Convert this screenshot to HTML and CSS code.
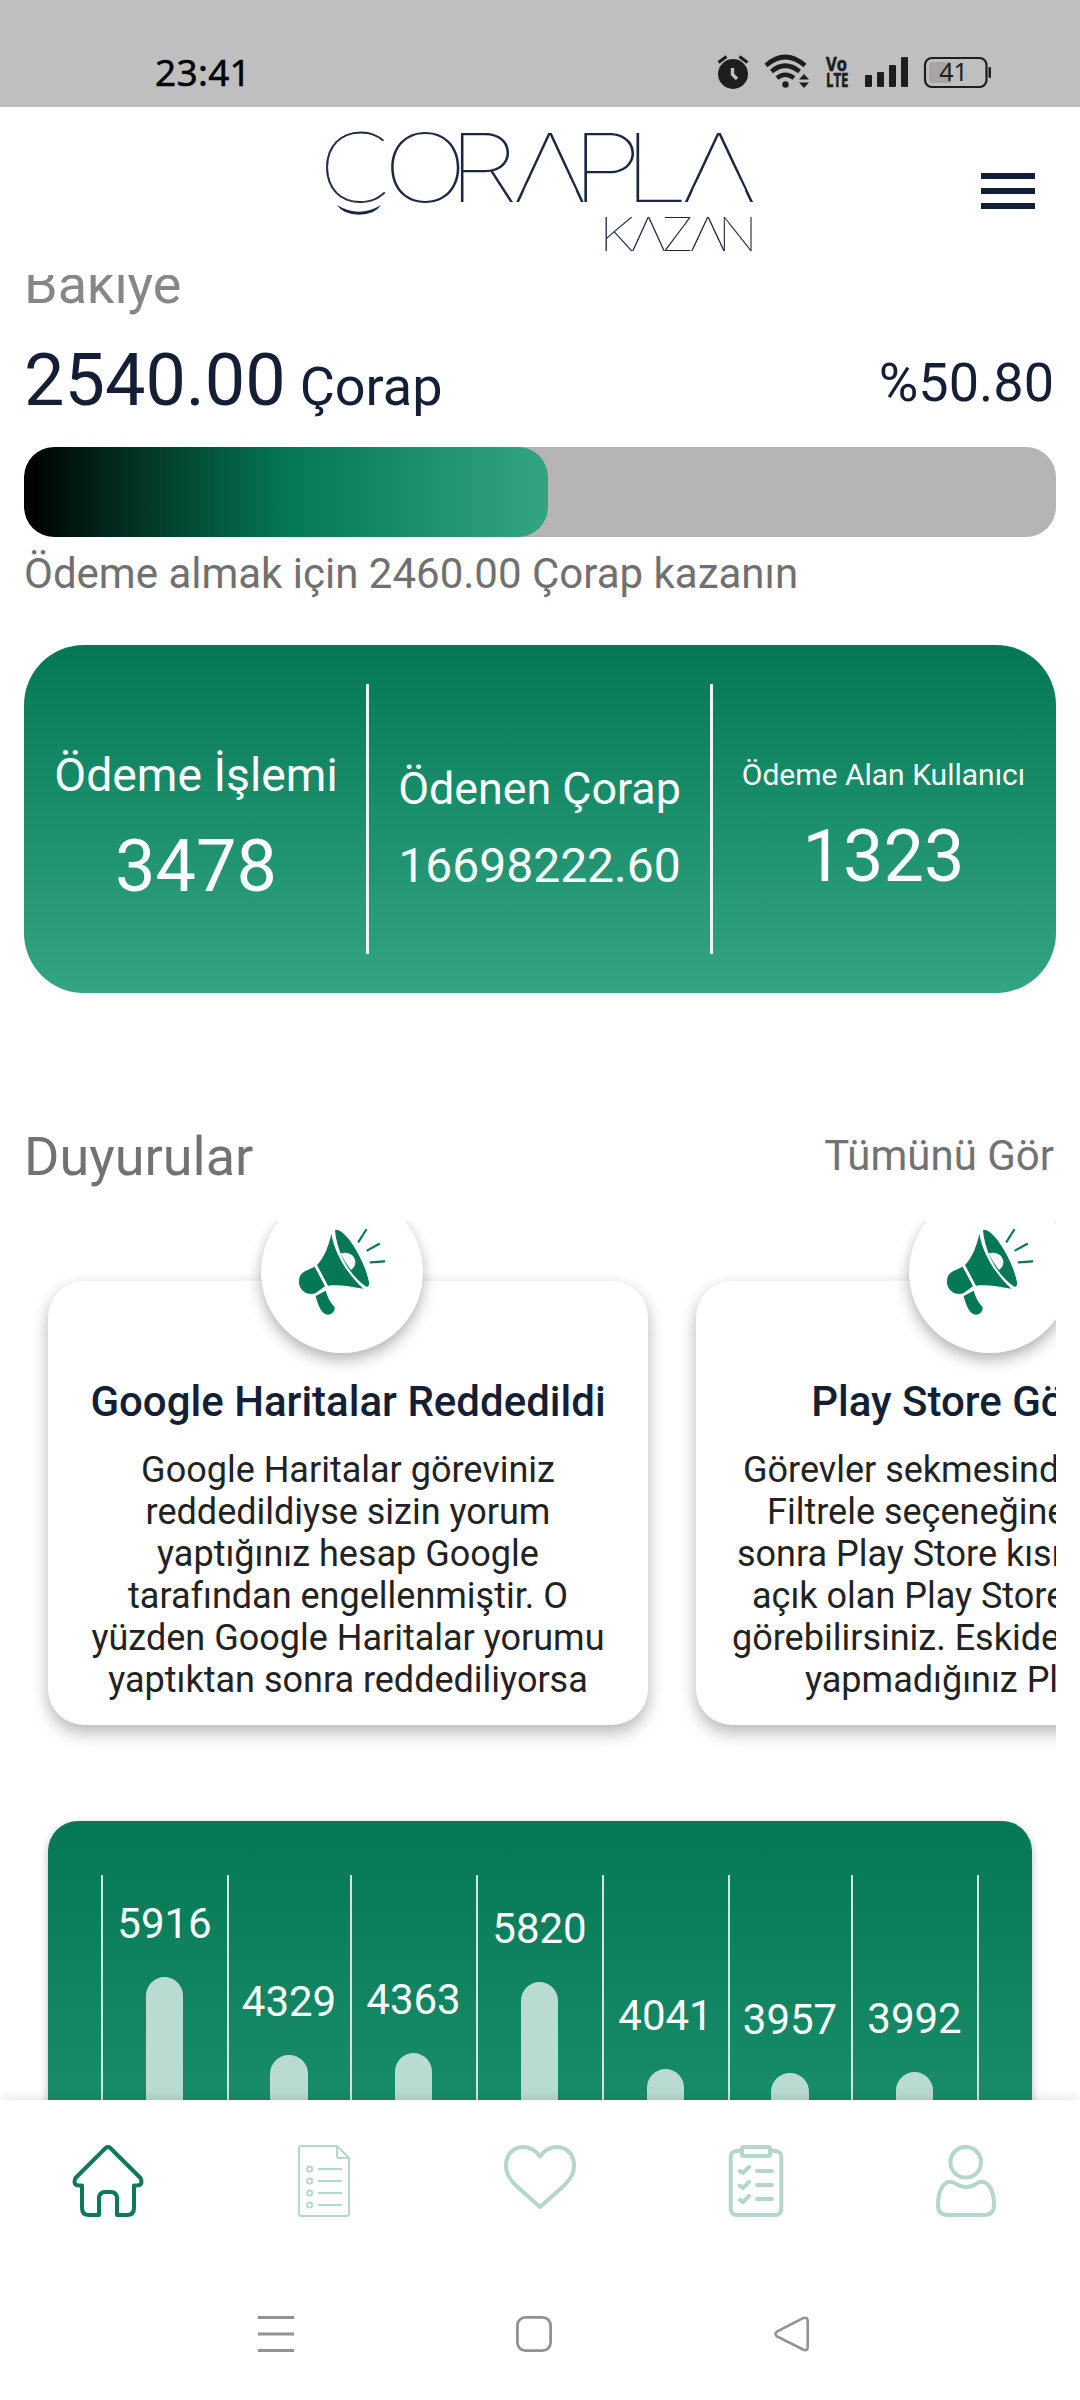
FILE: index.html
```
<!DOCTYPE html>
<html lang="tr">
<head>
<meta charset="utf-8">
<title>Çorapla Kazan</title>
<link rel="stylesheet" href="styles.css">
</head>
<body>
<div class="screen">
  <div class="status">
    <span class="clock">23:41</span>
    <svg class="status-icons" width="276" height="36" viewBox="716 54 276 36">
      <g fill="#1e1e1e">
        <circle cx="733" cy="74" r="15"/>
        <path d="M718.5 62.5l8-6M747.500 62.500l-8-6" stroke="#1e1e1e" stroke-width="3.200"/>
        <path d="M732.500 68v6.500l4.500 4.500" fill="none" stroke="#bfbfbf" stroke-width="3.400"/>
        <g fill="none" stroke="#1e1e1e" stroke-width="4.600">
          <path d="M766 65.500q19-17 39 0M771.500 71.500q13.500-11.500 28 0M777 78q8-6.500 17 0"/>
        </g>
        <circle cx="785.500" cy="84.500" r="3.200"/>
        <path d="M799 79.500l5-5.500 5 5.500zM799 82.500h10l-5 5.500z"/>
        <rect x="865" y="75" width="7" height="12" rx="1"/>
        <rect x="877" y="72" width="7" height="15" rx="1"/>
        <rect x="889" y="65" width="7" height="22" rx="1"/>
        <rect x="901" y="57" width="7" height="30" rx="1"/>
        <rect x="988.500" y="67" width="2.500" height="11" rx="1"/>
      </g>
      <rect x="925" y="58" width="61.500" height="29" rx="7" fill="none" stroke="#1e1e1e" stroke-width="2.200"/>
      <path d="M951 62v21h-18q-4 0-4-4v-13q0-4 4-4z" fill="#a5a5a5"/>
      <text class="batt" x="953.500" y="81" text-anchor="middle">41</text>
      <text class="lte" x="826" y="70.500" textLength="21" lengthAdjust="spacingAndGlyphs">Vo</text>
      <text class="lte" x="826" y="87" textLength="22.500" lengthAdjust="spacingAndGlyphs">LTE</text>
    </svg>
  </div>

  <header class="header">
    <svg class="logo" width="440" height="136" viewBox="320 124 440 136">
      <g class="logo-main">
        <text class="logo-c" transform="translate(319.400 201.500) scale(1.047 1)">C</text>
        <text transform="translate(383.100 201.500) scale(1.187 1)">O</text>
        <text transform="translate(447.900 201.500) scale(1.198 1)">R</text>
        <text transform="translate(512.500 201.500) scale(1.230 1)">A</text>
        <text transform="translate(571 201.500) scale(1.237 1)">P</text>
        <text transform="translate(623.200 201.500) scale(1.223 1)">L</text>
        <text transform="translate(681 201.500) scale(1.246 1)">A</text>
      </g>
      <g class="logo-sub">
        <text transform="translate(598.800 250.500) scale(1.280 1)">K</text>
        <text transform="translate(630.300 250.500) scale(1.218 1)">A</text>
        <text transform="translate(660.600 250.500) scale(1.200 1)">Z</text>
        <text transform="translate(689.200 250.500) scale(1.250 1)">A</text>
        <text transform="translate(717.900 250.500) scale(1.090 1)">N</text>
      </g>
      <!-- hides the crossbars -->
      <path fill="#fff" d="M536.600 165h26.800L575.700 190h-51.400zM705.400 165h27.300L745.200 190H693zM642.200 233h12.600l5.300 11h-23.200zM701.500 233h13l5.500 11h-24z"/>
      <!-- smile under the first letter -->
      <path fill="#1c2740" d="M337 205q22 13.500 44 0q-6 9.500-22 9.800q-16-.3-22-9.800z"/>
    </svg>
    <div class="burger"><i></i><i></i><i></i></div>
  </header>

  <main class="content">
    <h2 class="heading faded">Bakiye</h2>
    <div class="balance">
      <div class="amount">2540.00 <small>Çorap</small></div>
      <div class="percent">%50.80</div>
    </div>
    <div class="progress"><div class="progress-fill" style="width:50.8%"></div></div>
    <p class="hint">Ödeme almak için 2460.00 Çorap kazanın</p>

    <section class="stats">
      <div class="stat"><span class="label label-l">Ödeme İşlemi</span><span class="value">3478</span></div>
      <div class="stat"><span class="label label-m">Ödenen Çorap</span><span class="value value-m">16698222.60</span></div>
      <div class="stat"><span class="label label-s">Ödeme Alan Kullanıcı</span><span class="value">1323</span></div>
    </section>

    <div class="section-head">
      <h2 class="heading">Duyurular</h2>
      <a class="all">Tümünü Gör</a>
    </div>

    <section class="carousel">
      <article class="card">
        <div class="badge">
          <svg width="120" height="120" viewBox="0 0 360 360"><use href="#megaphone"/></svg>
        </div>
        <h3>Google Haritalar Reddedildi</h3>
        <p class="centered">
          <span>Google Haritalar göreviniz</span>
          <span>reddedildiyse sizin yorum</span>
          <span>yaptığınız hesap Google</span>
          <span>tarafından engellenmiştir. O</span>
          <span>yüzden Google Haritalar yorumu</span>
          <span>yaptıktan sonra reddediliyorsa</span>
        </p>
      </article>
      <article class="card">
        <div class="badge">
          <svg width="120" height="120" viewBox="0 0 360 360">
            <g id="megaphone">
              <g fill="#047855">
                <path d="M104 155L135 214L106 235C86 242 64 231 58 210C54 190 60 176 75 169Z"/>
                <path d="M154 56C146 92 134 126 111 150L144 212C175 208 210 214 250 221C205 180 165 120 154 56Z"/>
                <path d="M165 47C172 115 208 180 257 214C265 218 268 212 267 202C256 145 210 62 176 46C170 44 166 43 165 47Z"/>
                <path d="M137 227L107 243C112 265 122 290 135 297C150 304 165 293 164 277C150 262 142 245 137 227Z"/>
              </g>
              <path fill="#fff" d="M182 115C205 108 224 120 226 140C226 152 222 158 213 165C200 148 190 133 182 115Z"/>
              <path fill="none" stroke="#047855" stroke-width="6.500" stroke-linecap="round" d="M258 45L236 80M297 87L262 106M313 139L272 142"/>
            </g>
          </svg>
        </div>
        <h3>Play Store Görevleri</h3>
        <p class="indented">
          <span>Görevler sekmesinde</span>
          <span>Filtrele seçeneğine</span>
          <span>sonra Play Store kısmı</span>
          <span>açık olan Play Store</span>
          <span>görebilirsiniz. Eskiden</span>
          <span>yapmadığınız Play</span>
        </p>
      </article>
    </section>

    <section class="chart">
      <div class="plot">
        <div class="col"><span>5916</span><b style="height:291px"></b></div>
        <div class="col"><span>4329</span><b style="height:213px"></b></div>
        <div class="col"><span>4363</span><b style="height:214.700px"></b></div>
        <div class="col"><span>5820</span><b style="height:286.300px"></b></div>
        <div class="col"><span>4041</span><b style="height:199px"></b></div>
        <div class="col"><span>3957</span><b style="height:194.700px"></b></div>
        <div class="col"><span>3992</span><b style="height:196.400px"></b></div>
      </div>
    </section>
  </main>

  <nav class="tabs">
    <svg width="72" height="72" viewBox="0 0 72 72" fill="none" stroke="#0b7858" stroke-width="4" stroke-linejoin="round">
      <path d="M33.500 3.200Q36 .8 38.500 3.200L68.500 33Q71.500 40.500 65 40.500H62V63Q62 70 55 70H45V53.500Q45 47 38.500 47H33.500Q27 47 27 53.500V70H17Q10 70 10 63V40.500H7Q.5 40.500 3.500 33Z"/>
    </svg>
    <svg width="72" height="72" viewBox="0 0 72 72" fill="none" stroke="#b5d6ca" stroke-width="2" stroke-linejoin="round">
      <path d="M49 1H13Q11 1 11 3V69Q11 71 13 71H59Q61 71 61 69V13L49 1V11Q49 13 51 13H61"/>
      <path d="M30 24h24M30 36h24M30 48h24M30 60h24"/>
      <circle cx="21.700" cy="24" r="2.600"/><circle cx="21.700" cy="36" r="2.600"/><circle cx="21.700" cy="48" r="2.600"/><circle cx="21.700" cy="60" r="2.600"/>
    </svg>
    <svg width="72" height="72" viewBox="42 45 216 216" fill="none" stroke="#b5d6ca" stroke-width="12" stroke-linejoin="round">
      <path d="M150 231L85 173C60 150 48 132 48 106C48 74 70 51 100 51C122 51 138 62 150 80C162 62 178 51 200 51C230 51 252 74 252 106C252 132 240 150 215 173Z"/>
    </svg>
    <svg width="72" height="72" viewBox="0 0 72 72" fill="none" stroke="#b5d6ca" stroke-width="4" stroke-linejoin="round" stroke-linecap="round">
      <rect x="10.700" y="6" width="50.600" height="64" rx="6"/>
      <rect x="22" y="2" width="28" height="9" rx="1.500" fill="#fff"/>
      <path d="M19.800 26L23 28L29 22M19.800 40.500L23 43L29 37M19.800 55L23 57L29 51M37 26h15M37 40h15M37 54h15"/>
    </svg>
    <svg width="72" height="72" viewBox="0 0 72 72" fill="none" stroke="#b5d6ca" stroke-width="4">
      <circle cx="29.700" cy="17.300" r="15.300"/>
      <path d="M14 36.800Q17 36.500 20 39Q30 45.500 40 39Q43 36.500 46 36.800C54 37.500 58 48 58 60Q58 70 48 70H12Q2 70 2 60C2 48 6 37.500 14 36.800Z"/>
    </svg>
  </nav>

  <div class="sysnav">
    <svg width="36" height="36" viewBox="0 0 36 36" fill="none" stroke="#929292" stroke-width="3"><path d="M0 1.500h36M0 18h36M0 34.500h36"/></svg>
    <svg width="36" height="36" viewBox="0 0 36 36" fill="none" stroke="#929292" stroke-width="2.800"><rect x="1.400" y="1.400" width="33.200" height="33.200" rx="8"/></svg>
    <svg width="36" height="36" viewBox="0 0 36 36" fill="none" stroke="#929292" stroke-width="2.600"><path d="M29 2.200Q33.700 .5 33.700 5V31Q33.700 35.500 29 33.500L3 20.500Q0 18 3 15.500Z"/></svg>
  </div>
</div>
</body>
</html>
```
FILE: styles.css
```
* { box-sizing: border-box; margin: 0; padding: 0; }

body {
  width: 1080px;
  height: 2400px;
  background: #fff;
  font-family: Roboto, sans-serif;
  font-weight: 400;
  overflow: hidden;
}

.screen { display: flex; flex-direction: column; height: 2400px; overflow: hidden; }

/* status bar */
.status {
  flex: none;
  height: 107px;
  padding: 0 88px 0 155px;
  background: #bfbfbf;
  display: flex;
  justify-content: space-between;
  align-items: flex-start;
}
.clock { margin-top: 47px; font: 400 37px/50px "Noto Sans", sans-serif; letter-spacing: .3px; -webkit-text-stroke: .5px #000; color: #000; }
.status-icons { margin-top: 54px; }
.batt { font: 400 25px "Noto Sans", sans-serif; fill: #1e1e1e; }
.lte { font: 700 19px "Open Sans", sans-serif; fill: #1e1e1e; stroke: #1e1e1e; stroke-width: .6px; }

/* header */
.header {
  flex: none;
  height: 168px;
  padding: 17px 45px 0 320px;
  background: #fff;
  display: flex;
  justify-content: space-between;
  align-items: flex-start;
}
.logo text { font-family: Inter, sans-serif; font-weight: 100; fill: #1c2740; }
.logo-main text { font-size: 95.300px; }
.logo-main .logo-c { font-family: Lato, sans-serif; font-size: 97.500px; stroke: #1c2740; stroke-width: .8px; }
.logo-sub text { font-size: 46.800px; }
.burger { width: 54px; margin-top: 49px; display: grid; gap: 9px; }
.burger i { height: 6px; background: #121e35; }

/* scrolled content */
.content { flex: none; height: 1825px; padding: 0 24px; overflow: hidden; }
.heading { font-size: 54px; line-height: 64px; font-weight: 400; color: #727272; }
.faded { margin-top: -22px; color: #878787; }

.balance {
  height: 84px;
  margin-top: 22px;
  display: flex;
  justify-content: space-between;
  color: #141f36;
}
.amount { font-size: 72px; line-height: 84px; }
.amount small { font-size: 54px; margin-left: -4px; }
.percent { font-size: 54px; line-height: 88px; padding-right: 2px; }

.progress { height: 90px; margin-top: 24px; border-radius: 30px; background: #b5b5b5; overflow: hidden; }
.progress-fill { height: 90px; border-radius: 30px; background: linear-gradient(90deg, #000, #047855 50%, #33a583); }
.hint { margin-top: 12px; font-size: 42px; line-height: 50px; color: #707070; }

/* totals */
.stats {
  height: 348px;
  margin-top: 46px;
  padding: 39px 0;
  border-radius: 60px;
  background: linear-gradient(#047855, #33a583);
  display: grid;
  grid-template-columns: 1fr 1fr 1fr;
  color: #fff;
}
.stat {
  padding-top: 18px;
  display: flex;
  flex-direction: column;
  align-items: center;
  justify-content: center;
  gap: 23px;
  white-space: nowrap;
}
.stat + .stat { border-left: 3px solid #edf6f3; margin-left: -2px; padding-right: 2px; }
.label-l { font-size: 46.300px; line-height: 54px; }
.label-m { font-size: 44.800px; line-height: 53px; }
.label-s { font-size: 30px; line-height: 35px; }
.value { font-size: 72px; line-height: 84px; }
.value-m { font-size: 48px; line-height: 56px; }

/* announcements */
.section-head { margin-top: 132px; height: 64px; display: flex; justify-content: space-between; }
.all { font-size: 42px; line-height: 61px; color: #727272; padding-right: 2px; }
.carousel {
  height: 552px;
  margin-top: 32px;
  padding: 60px 24px 0;
  display: flex;
  gap: 48px;
  overflow: hidden;
}
.card {
  position: relative;
  flex: none;
  width: 600px;
  height: 444px;
  padding-top: 96px;
  border-radius: 36px;
  background: #fff;
  box-shadow: 0 9px 17px rgba(0, 0, 0, .23), 0 2px 14px rgba(0, 0, 0, .08);
  white-space: nowrap;
}
.badge {
  position: absolute;
  left: 213px;
  top: -90px;
  width: 162px;
  height: 162px;
  padding: 24px 0 0 19px;
  border-radius: 50%;
  background: #fff;
  box-shadow: 0 8px 15px rgba(0, 0, 0, .24), 0 2px 11px rgba(0, 0, 0, .08);
}
.card h3 { text-align: center; font-size: 42px; line-height: 50px; font-weight: 500; color: #141f36; }
.card p { margin-top: 22px; font-size: 36px; line-height: 42px; color: #222; }
.card p span { display: block; }
.centered { text-align: center; }
.indented span:nth-child(1) { padding-left: 47px; }
.indented span:nth-child(2) { padding-left: 71px; }
.indented span:nth-child(3) { padding-left: 41px; }
.indented span:nth-child(4) { padding-left: 56px; }
.indented span:nth-child(5) { padding-left: 36px; }
.indented span:nth-child(6) { padding-left: 109px; }

/* chart */
.chart {
  height: 630px;
  margin: 48px 24px 0;
  padding: 54px 53px 183px;
  border-radius: 30px;
  background: linear-gradient(#047855, #33a583);
  box-shadow: 0 3px 9px rgba(0, 0, 0, .25);
}
.plot {
  height: 393px;
  display: grid;
  grid-template-columns: 126px 123px 126px 126px 126px 123px 128px;
}
.col {
  border-left: 2px solid #cfe5dd;
  padding-right: 1px;
  display: flex;
  flex-direction: column;
  align-items: center;
  justify-content: flex-end;
  color: #fff;
}
.col:last-child { border-right: 2px solid #cfe5dd; }
.col span { font-size: 42px; line-height: 50px; margin-bottom: 28px; }
.col b { flex: none; width: 37.500px; border-radius: 18.750px 18.750px 0 0; background: #b9dbd1; }

/* bottom bars */
.tabs {
  position: relative;
  flex: none;
  height: 168px;
  padding-top: 45px;
  background: #fff;
  box-shadow: 0 0 12px rgba(0, 0, 0, .15);
  display: grid;
  grid-template-columns: repeat(5, 1fr);
  justify-items: center;
}
.sysnav { position: relative; flex: 1; padding: 48px 270px 0 258px; background: #fff; display: flex; justify-content: space-between; }
```
